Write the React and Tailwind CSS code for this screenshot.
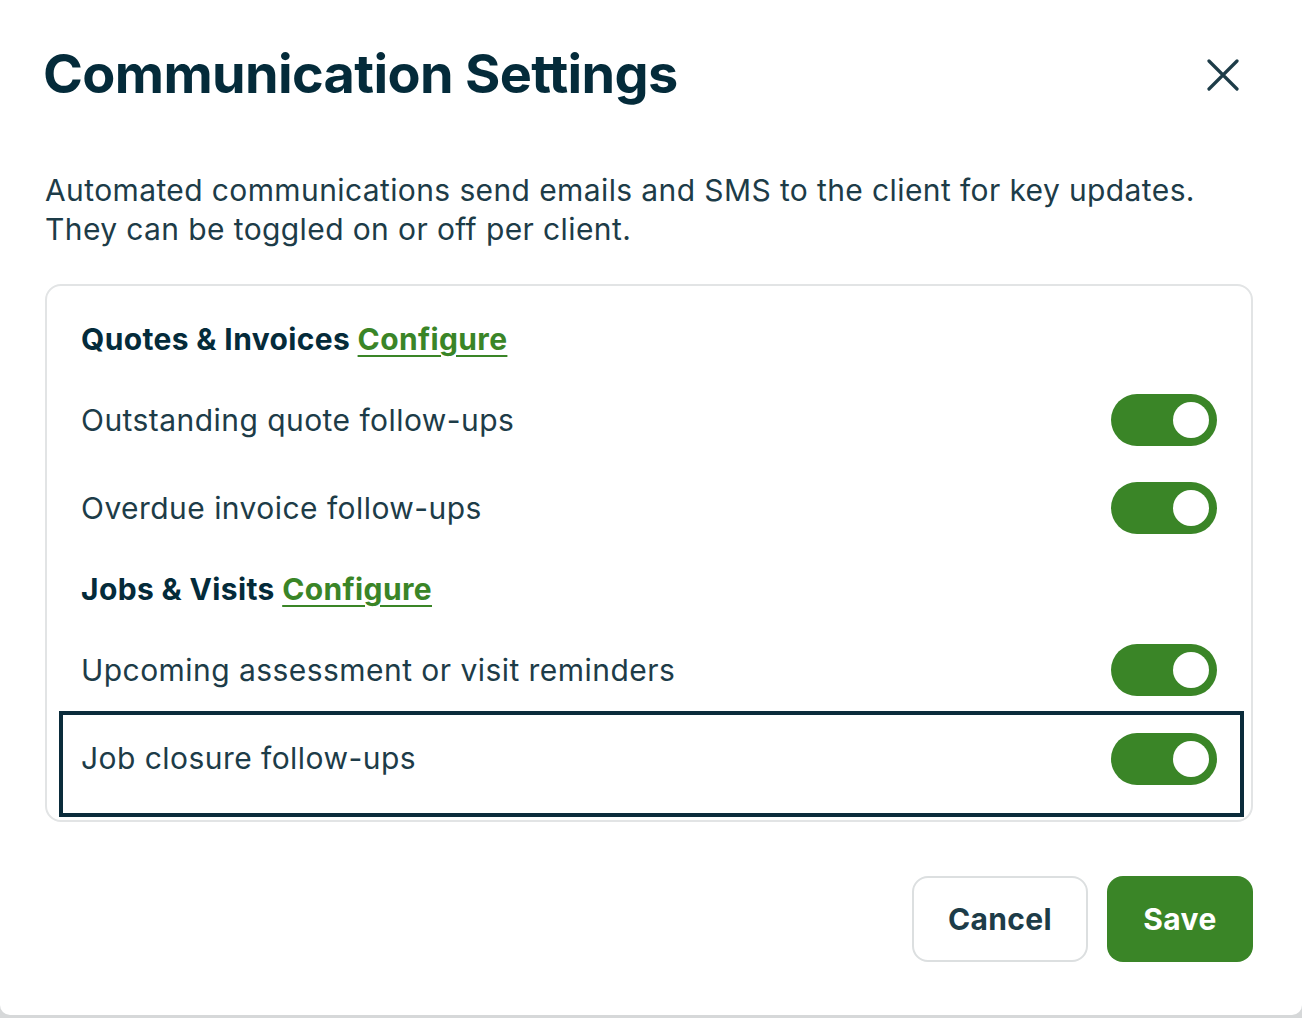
import { useState } from "react";

const font = { fontFamily: "Inter, 'Noto Sans', sans-serif" };

function Toggle({ on, onChange }) {
  return (
    <button
      onClick={onChange}
      className={`flex items-center w-[106px] h-[52px] rounded-full px-[8px] ${
        on ? "bg-[#3a8527] justify-end" : "bg-[#c9cfd2] justify-start"
      }`}
    >
      <span className="block w-[36px] h-[36px] rounded-full bg-white" />
    </button>
  );
}

function Row({ label, on, onChange }) {
  return (
    <div className="flex items-center justify-between h-[88px]">
      <span className="text-[30px] tracking-[0.015em] text-[#1d3c48]">{label}</span>
      <Toggle on={on} onChange={onChange} />
    </div>
  );
}

function Heading({ title }) {
  return (
    <div className="flex items-center h-[74px]">
      <h2 className="text-[30px] font-bold text-[#042b3a] tracking-[0.012em]">
        {title}{" "}
        <a href="#" className="text-[#3a8527] underline underline-offset-[5px] decoration-[2px]">
          Configure
        </a>
      </h2>
    </div>
  );
}

export default function App() {
  const [toggles, setToggles] = useState({
    quotes: true,
    invoices: true,
    visits: true,
    closure: true,
  });
  const flip = (k) => setToggles((t) => ({ ...t, [k]: !t[k] }));

  return (
    <div className="h-[1018px] bg-[#d6d8d9]" style={font}>
      <div className="h-[1015px] bg-white rounded-b-[10px] pl-[45px] pr-[49px] pt-[38px]">
        {/* Header */}
        <div className="flex items-start justify-between">
          <h1 className="text-[54px] leading-[72px] font-bold text-[#042b3a] tracking-[-0.012em] -ml-[2px]">
            Communication Settings
          </h1>
          <button className="mt-[21px] mr-[14px] text-[#1d3c48]">
            <svg width="32" height="32" viewBox="0 0 32 32" fill="none">
              <path
                d="M2 2L30 30M30 2L2 30"
                stroke="currentColor"
                strokeWidth="3.2"
                strokeLinecap="round"
              />
            </svg>
          </button>
        </div>

        <p className="mt-[61px] text-[30px] leading-[39px] tracking-[0.013em] text-[#1d3c48]">
          Automated communications send emails and SMS to the client for key updates.
          <br />
          They can be toggled on or off per client.
        </p>

        {/* Settings box */}
        <div className="mt-[35px] border-2 border-[#e2e4e5] rounded-[16px] pt-[16px] pb-[3px] px-[34px]">
          <Heading title="Quotes & Invoices" />
          <Row label="Outstanding quote follow-ups" on={toggles.quotes} onChange={() => flip("quotes")} />
          <Row label="Overdue invoice follow-ups" on={toggles.invoices} onChange={() => flip("invoices")} />
          <Heading title="Jobs & Visits" />
          <Row
            label="Upcoming assessment or visit reminders"
            on={toggles.visits}
            onChange={() => flip("visits")}
          />
          <div className="-mt-[3px] -ml-[22px] -mr-[27px] h-[106px] border-4 border-[#0b2c3b] pl-[18px] pr-[23px] pb-[11px] flex items-center justify-between">
            <span className="text-[30px] tracking-[0.015em] text-[#1d3c48]">Job closure follow-ups</span>
            <Toggle on={toggles.closure} onChange={() => flip("closure")} />
          </div>
        </div>

        {/* Footer */}
        <div className="mt-[54px] flex justify-end gap-[19px]">
          <button className="w-[176px] h-[86px] rounded-[16px] border-2 border-[#dcdfe0] text-[30px] tracking-[0.012em] font-bold text-[#1d3c48]">
            Cancel
          </button>
          <button className="w-[146px] h-[86px] rounded-[16px] bg-[#3a8527] text-[30px] tracking-[0.012em] font-bold text-white">
            Save
          </button>
        </div>
      </div>
    </div>
  );
}
